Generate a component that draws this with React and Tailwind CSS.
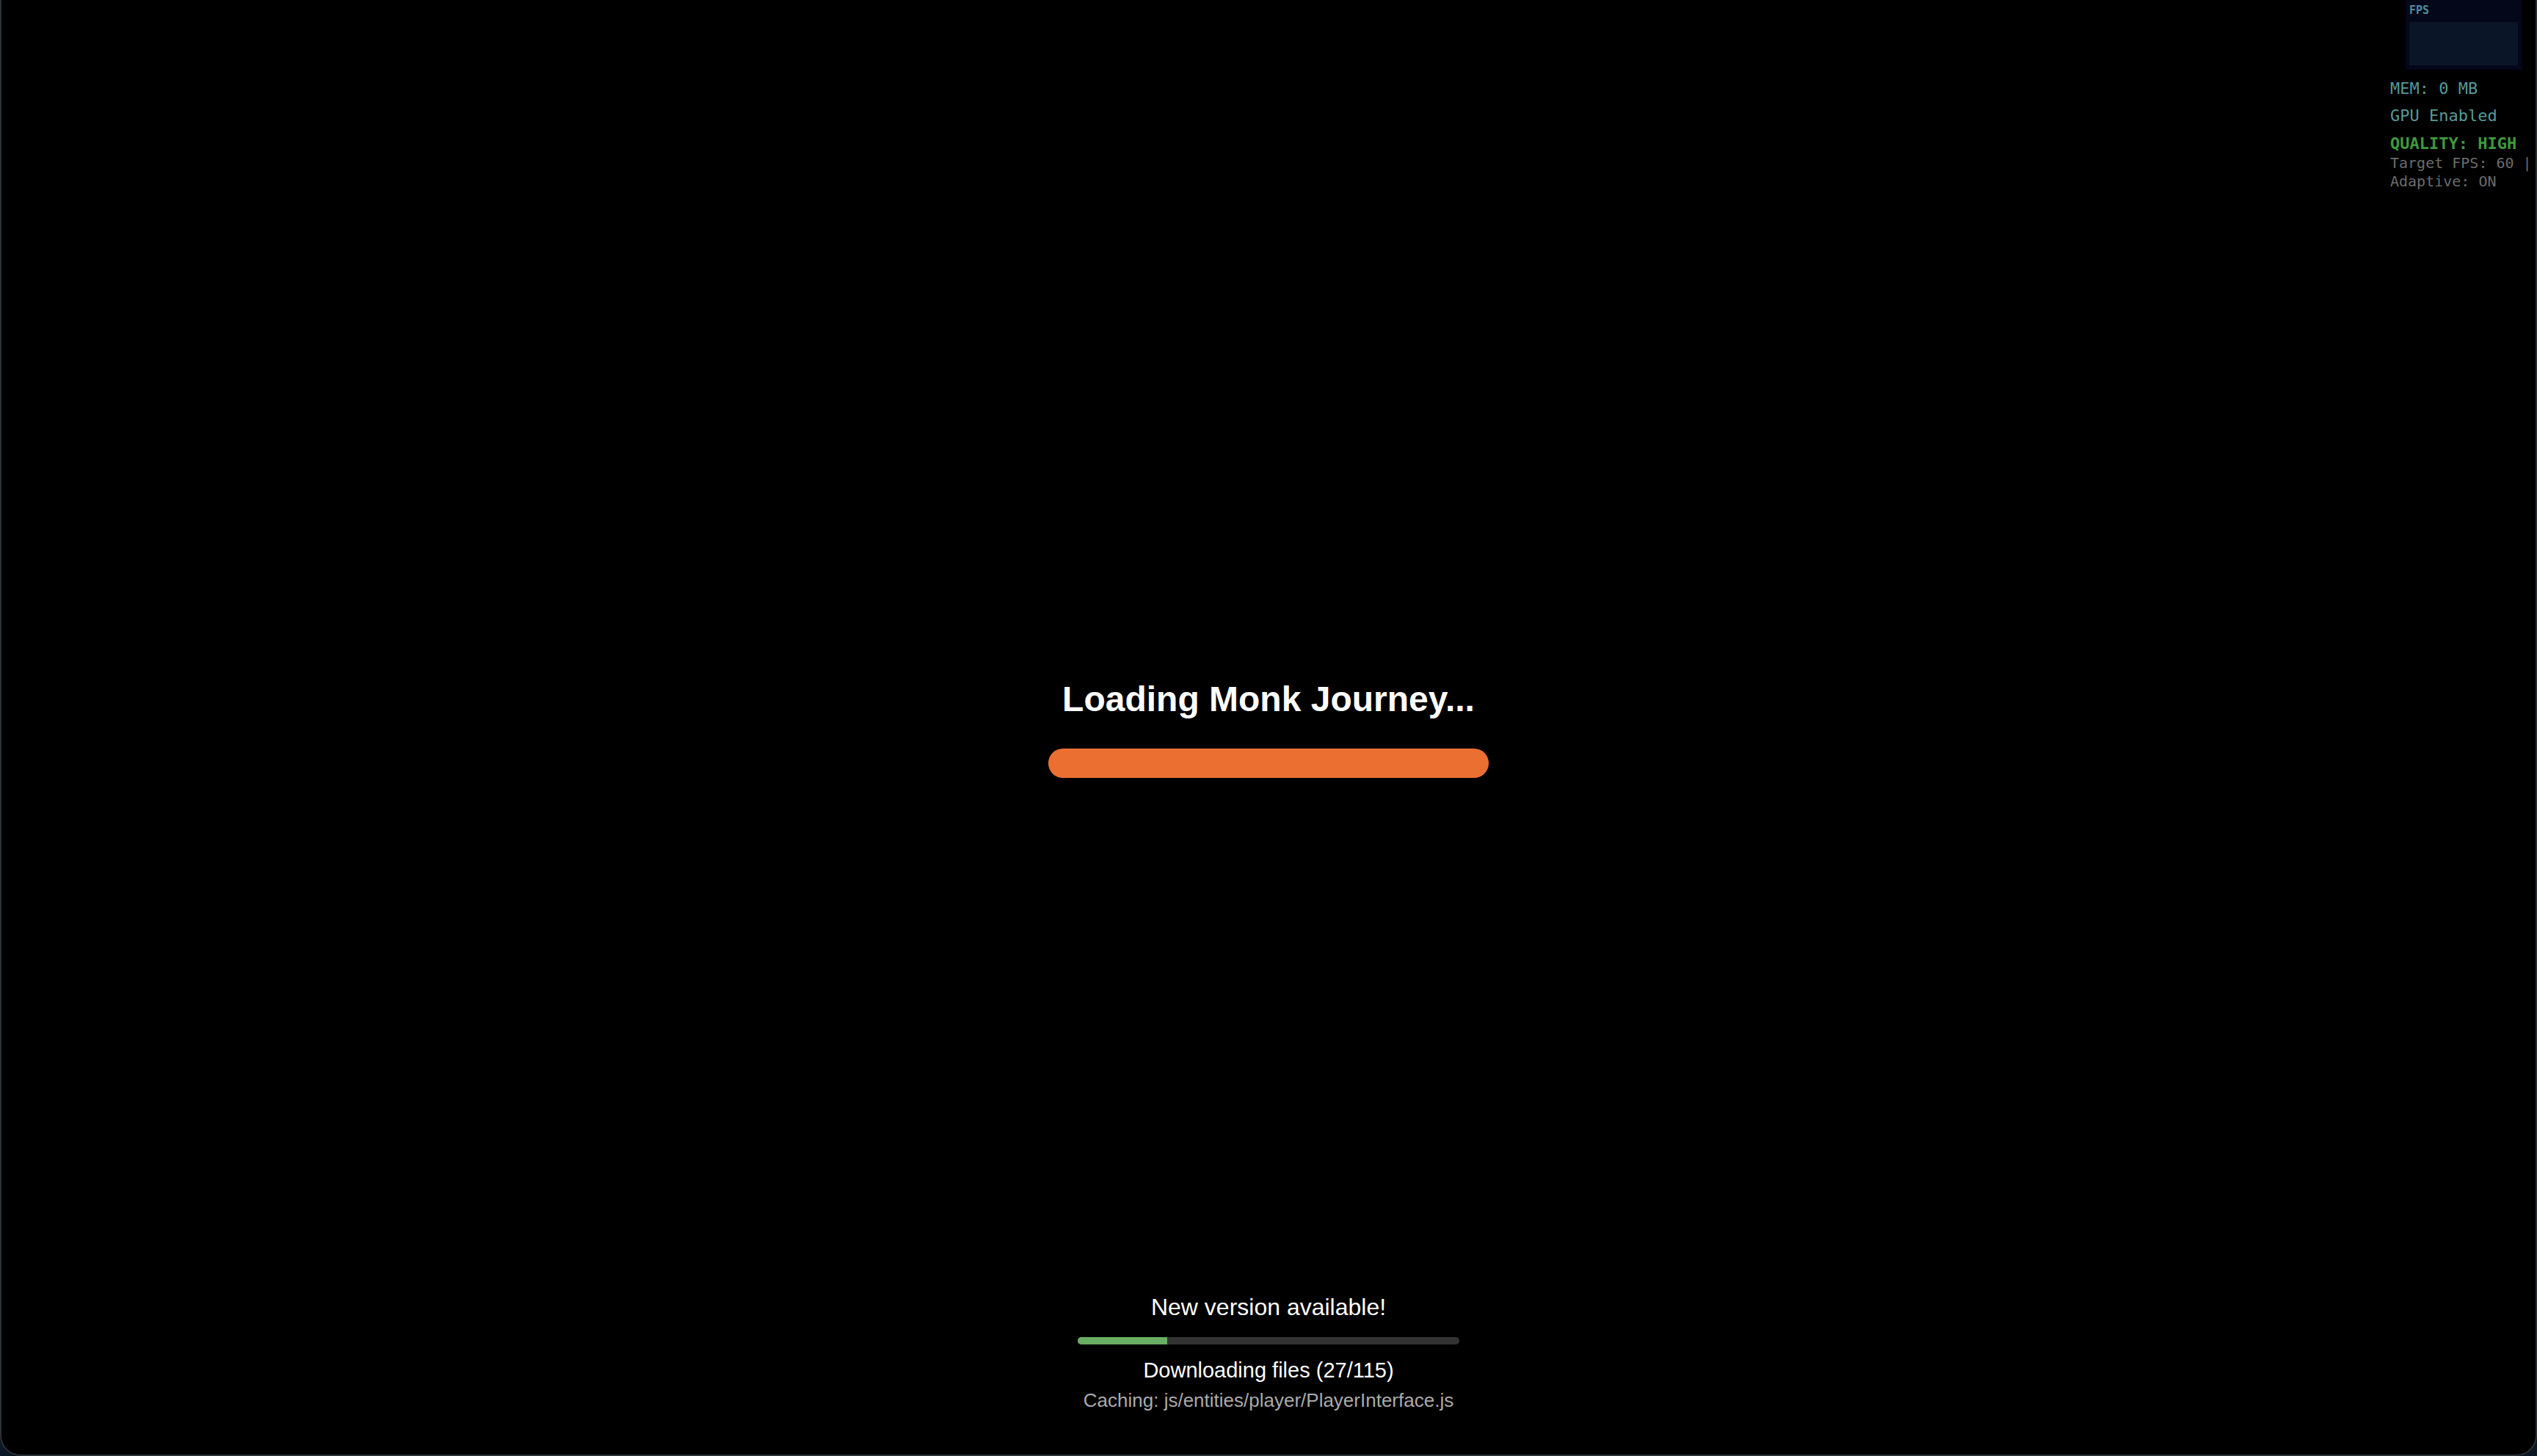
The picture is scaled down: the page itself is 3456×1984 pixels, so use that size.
import React from "react";

export default function App() {
  const done = 27;
  const total = 115;
  const pct = (done / total) * 100;
  return (
    <div className="w-[3456px] h-[1984px] bg-[#0b1724] overflow-hidden">
      <div className="relative h-full flex flex-col bg-black border-x-2 border-b-2 border-[#2c3034] rounded-b-[28px] overflow-hidden font-['Liberation_Sans',Arial,sans-serif]">
        <div className="flex-1" />
        <div className="mt-[62px] flex flex-col items-center">
          <h2 className="text-[48px] leading-[55px] font-bold text-white">Loading Monk Journey...</h2>
          <div className="mt-[40px] w-[600px] h-[40px] rounded-[20px] bg-[#eb6f31]" />
        </div>
        <div className="flex-1 flex flex-col justify-end items-center pb-[60px]">
          <div className="text-[32px] leading-[37px] text-white">New version available!</div>
          <div className="mt-[22px] w-[520px] h-[10px] rounded-[5px] bg-[#333333] overflow-hidden">
            <div className="h-full bg-[#69ae63]" style={{ width: pct + "%" }} />
          </div>
          <div className="mt-[19px] text-[29px] leading-[32px] text-white">Downloading files (27/115)</div>
          <div className="mt-[11px] text-[26px] leading-[28px] text-[#aaaaaa]">Caching: js/entities/player/PlayerInterface.js</div>
        </div>

        <div className="absolute top-0 right-[19px] w-[179px] flex flex-col font-['DejaVu_Sans_Mono',monospace]">
          <div className="self-end w-[158px] h-[95px] bg-[#04071a] px-[5px] pt-[4px]">
            <div className="text-[15px] leading-[20px] font-bold text-[#4f8d9c]">FPS</div>
            <div className="mt-[6px] h-[59px] bg-[#0b1528]" />
          </div>
          <div className="mt-[12px] text-[22px] leading-[28px] text-[#56999a] whitespace-nowrap">MEM: 0 MB</div>
          <div className="mt-[9px] text-[22px] leading-[28px] text-[#56999a] whitespace-nowrap">GPU Enabled</div>
          <div className="mt-[10px] text-[22px] leading-[28px] font-bold text-[#3f9a3c] whitespace-nowrap">QUALITY: HIGH</div>
          <div className="text-[20px] leading-[25px] text-[#6b6b6b] whitespace-nowrap">Target FPS: 60 |</div>
          <div className="text-[20px] leading-[25px] text-[#6b6b6b] whitespace-nowrap">Adaptive: ON</div>
        </div>
      </div>
    </div>
  );
}
